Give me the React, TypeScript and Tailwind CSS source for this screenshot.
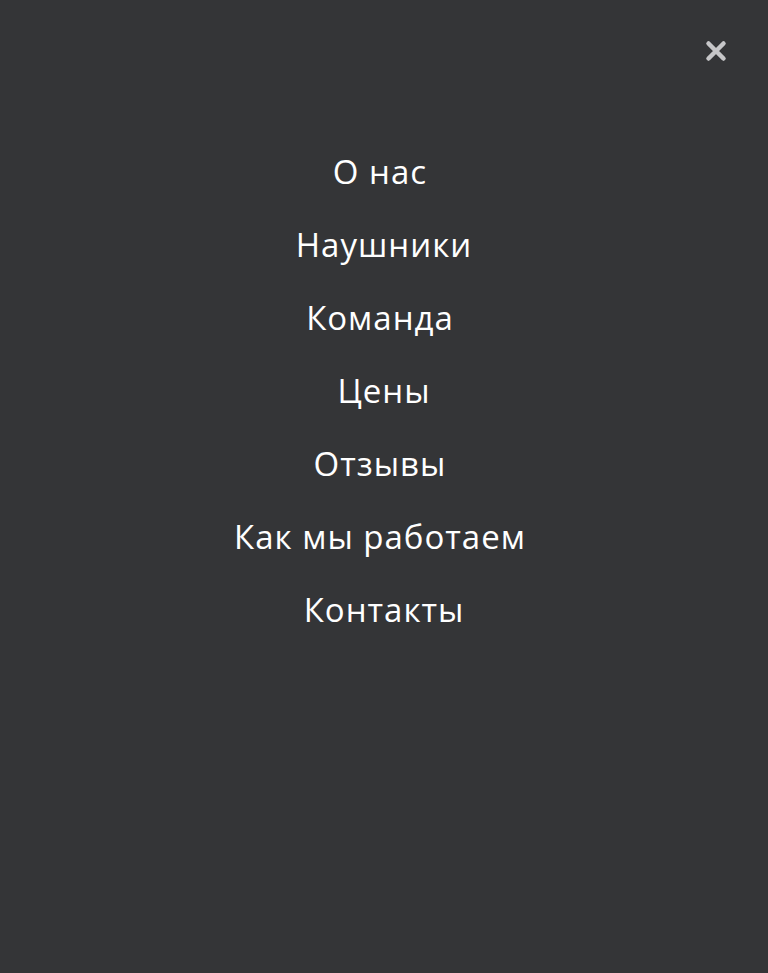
export default function App() {
  const items = [
    { label: "О нас", pad: true },
    { label: "Наушники", pad: false },
    { label: "Команда", pad: true },
    { label: "Цены", pad: false },
    { label: "Отзывы", pad: true },
    { label: "Как мы работаем", pad: true },
    { label: "Контакты", pad: false },
  ];

  return (
    <div className="min-h-[973px] w-full bg-[#343537] relative font-['Open_Sans',sans-serif]">
      <button className="absolute right-[40px] top-[39px] w-6 h-6 flex items-center justify-center">
        <svg width="24" height="24" viewBox="0 0 24 24">
          <path d="M4.5 4.5 L19.5 19.5 M19.5 4.5 L4.5 19.5" stroke="#c6c6c8" strokeWidth="4.5" strokeLinecap="round" />
        </svg>
      </button>
      <nav className="flex flex-col items-center pt-[135px]">
        {items.map((item) => (
          <a
            key={item.label}
            href="#"
            className={`h-[73px] leading-[73px] text-[33px] tracking-[1px] text-white ${item.pad ? "pr-[8px]" : "pl-0"}`}
          >
            {item.label}
          </a>
        ))}
      </nav>
    </div>
  );
}
